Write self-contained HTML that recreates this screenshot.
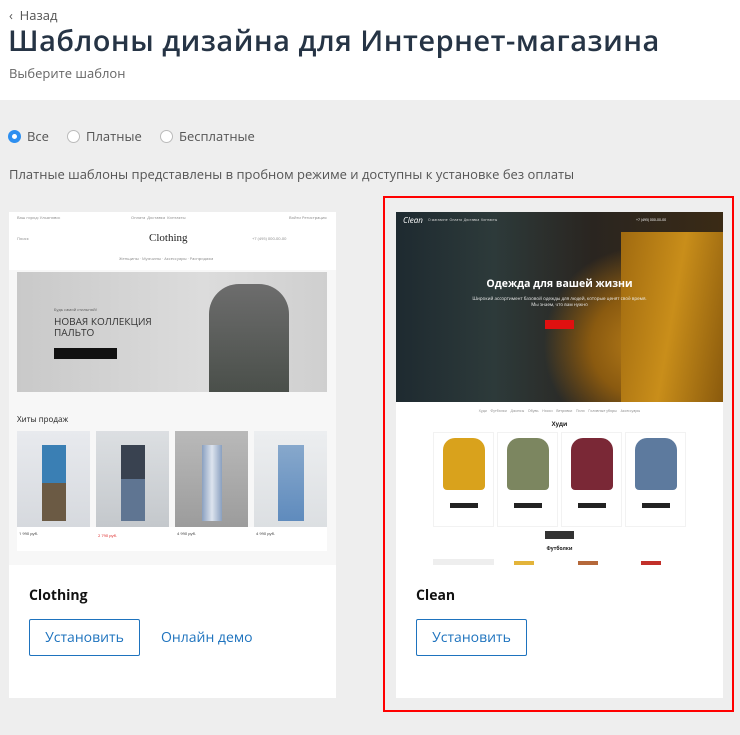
<!DOCTYPE html>
<html><head><meta charset="utf-8"><style>
*{margin:0;padding:0;box-sizing:border-box}
body{width:740px;height:735px;overflow:hidden;font-family:"Open Sans","Liberation Sans","DejaVu Sans",sans-serif;background:#eee;position:relative}
.hdr{position:absolute;left:0;top:0;width:740px;height:100px;background:#fff}
.abs{position:absolute}
.back{left:9px;top:6px;font-size:13px;color:#555}
h1{position:absolute;left:8px;top:21px;font-size:29px;font-weight:600;color:#263445;letter-spacing:0.5px;white-space:nowrap}
.sub{left:9px;top:64px;font-size:13px;color:#666}
.radio{top:127px;font-size:13px;color:#555;display:flex;align-items:center}
.rc{width:13px;height:13px;border-radius:50%;border:1px solid #bbb;background:#fff;margin-right:6px;display:inline-block}
.rc.on{border:4px solid #2d8ff0}
.note{left:9px;top:165px;font-size:13px;color:#555;white-space:nowrap}
.card{position:absolute;background:#fff;width:327px;height:486px;top:212px}
.prev{position:absolute;left:0;top:0;width:327px;height:353px;overflow:hidden;background:#f7f7f7}
.ttl{position:absolute;left:20px;top:374px;font-size:14px;font-weight:bold;color:#111}
.btn{position:absolute;left:20px;top:407px;width:111px;height:37px;border:1px solid #1e73be;border-radius:2px;color:#1e73be;font-size:14px;display:flex;align-items:center;justify-content:center}
.demo{position:absolute;left:152px;top:416px;color:#1e73be;font-size:14px}
.t{position:absolute;font-size:4px;color:#888;white-space:nowrap}
</style></head><body>
<div class="hdr"></div>
<div class="abs back">&#8249;&nbsp; Назад</div>
<h1>Шаблоны дизайна для Интернет-магазина</h1>
<div class="abs sub">Выберите шаблон</div>
<div class="abs radio" style="left:8px"><span class="rc on"></span>Все</div>
<div class="abs radio" style="left:67px"><span class="rc"></span>Платные</div>
<div class="abs radio" style="left:160px"><span class="rc"></span>Бесплатные</div>
<div class="abs note">Платные шаблоны представлены в пробном режиме и доступны к установке без оплаты</div>

<div class="card" style="left:9px">
 <div class="prev">
  <div class="abs" style="left:0;top:0;width:327px;height:58px;background:#fff"></div>
  <div class="t" style="left:8px;top:4px">Ваш город: Ульяновск</div>
  <div class="t" style="left:122px;top:4px">Оплата &nbsp;Доставка &nbsp;Контакты</div>
  <div class="t" style="left:280px;top:4px">Войти Регистрация</div>
  <div class="t" style="left:8px;top:25px">Поиск</div>
  <div class="abs" style="left:140px;top:20px;font-family:'Liberation Serif',serif;font-size:11px;color:#222">Clothing</div>
  <div class="t" style="left:243px;top:25px">+7 (495) 000-00-00</div>
  <div class="t" style="left:110px;top:45px">Женщины · Мужчины · Аксессуары · Распродажа</div>
  <div class="abs" style="left:8px;top:60px;width:310px;height:120px;background:linear-gradient(90deg,#c9c9c9,#dcdcdc 60%,#cfcfcf)"></div>
  <div class="abs" style="left:200px;top:72px;width:80px;height:108px;background:linear-gradient(#6d6d6d,#4a4f4a);border-radius:30px 30px 0 0"></div>
  <div class="t" style="left:45px;top:96px;color:#555">Будь самой стильной!</div>
  <div class="abs" style="left:45px;top:104px;font-size:10px;color:#333;line-height:11px">НОВАЯ КОЛЛЕКЦИЯ<br>ПАЛЬТО</div>
  <div class="abs" style="left:45px;top:136px;width:63px;height:11px;background:#111"></div>
  <div class="abs" style="left:8px;top:202px;font-size:8px;color:#222">Хиты продаж</div>
  <div class="abs" style="left:8px;top:219px;width:73px;height:96px;background:linear-gradient(#e8eaee,#d6d9de)"><div style="margin:14px auto 0;width:24px;height:76px;background:linear-gradient(#3a7fb4 50%,#6b5a44 50%)"></div></div>
  <div class="abs" style="left:87px;top:219px;width:73px;height:96px;background:linear-gradient(#dcdfe2,#c4c8cc)"><div style="margin:14px auto 0;width:24px;height:76px;background:linear-gradient(#394250 45%,#5f7592 45%)"></div></div>
  <div class="abs" style="left:166px;top:219px;width:73px;height:96px;background:linear-gradient(#b9b9b9,#9c9c9c)"><div style="margin:14px auto 0;width:20px;height:76px;background:linear-gradient(90deg,#8aa0c0,#dde4ee,#8aa0c0)"></div></div>
  <div class="abs" style="left:245px;top:219px;width:73px;height:96px;background:linear-gradient(#eceef0,#dcdfe2)"><div style="margin:14px auto 0;width:26px;height:76px;background:linear-gradient(#87a8cc,#5f8bbd)"></div></div>
  <div class="abs" style="left:8px;top:315px;width:310px;height:24px;background:#fff"></div>
  <div class="t" style="left:10px;top:320px;color:#333">1 990 руб.</div>
  <div class="t" style="left:89px;top:322px;color:#d22">2 790 руб.</div>
  <div class="t" style="left:168px;top:320px;color:#333">4 990 руб.</div>
  <div class="t" style="left:247px;top:320px;color:#333">4 990 руб.</div>
 </div>
 <div class="ttl">Clothing</div>
 <div class="btn">Установить</div>
 <div class="demo">Онлайн демо</div>
</div>

<div class="abs" style="left:383px;top:196px;width:351px;height:516px;border:2px solid #f00"></div>
<div class="card" style="left:396px">
 <div class="prev" style="background:#fff">
  <div class="abs" style="left:0;top:0;width:327px;height:190px;background:radial-gradient(circle at 75% 70%,#b57b18 0,#8a5a10 18%,transparent 35%),linear-gradient(90deg,#1e2a30,#2d3a3a 30%,#2a2520 60%,#3a2a15)"></div>
  <div class="abs" style="left:225px;top:20px;width:102px;height:170px;background:linear-gradient(100deg,#a06a10,#c98e1a 50%,#8a5a0d)"></div>
  <div class="abs" style="left:7px;top:3px;font-size:8px;color:#fff;font-style:italic">Clean</div>
  <div class="t" style="left:32px;top:6px;color:#ddd;font-size:3.5px">О магазине &nbsp;Оплата &nbsp;Доставка &nbsp;Контакты</div>
  <div class="t" style="left:240px;top:6px;color:#fff;font-size:3.5px">+7 (495) 000-00-00</div>
  <div class="abs" style="left:0;top:65px;width:327px;text-align:center;font-size:10.5px;font-weight:bold;color:#fff">Одежда для вашей жизни</div>
  <div class="abs" style="left:0;top:84px;width:327px;text-align:center;font-size:4.5px;color:#eee">Широкий ассортимент базовой одежды для людей, которые ценят своё время.<br>Мы знаем, что вам нужно</div>
  <div class="abs" style="left:149px;top:108px;width:29px;height:9px;background:#e01010"></div>
  <div class="t" style="left:0;top:197px;width:327px;text-align:center;font-size:3.5px">Худи &nbsp;&nbsp; Футболки &nbsp;&nbsp; Джинсы &nbsp;&nbsp; Обувь &nbsp;&nbsp; Носки &nbsp;&nbsp; Ветровки &nbsp;&nbsp; Поло &nbsp;&nbsp; Головные уборы &nbsp;&nbsp; Аксессуары</div>
  <div class="abs" style="left:0;top:208px;width:327px;text-align:center;font-size:6px;font-weight:bold;color:#222">Худи</div>
  <div class="abs" style="left:37px;top:220px;width:61px;height:95px;border:1px solid #f2f2f2"><div style="margin:5px auto 0;width:42px;height:52px;background:#d9a21c;border-radius:12px 12px 4px 4px"></div><div style="margin:13px auto 0;width:28px;height:5px;background:#222"></div></div>
  <div class="abs" style="left:101px;top:220px;width:61px;height:95px;border:1px solid #f2f2f2"><div style="margin:5px auto 0;width:42px;height:52px;background:#7c8660;border-radius:12px 12px 4px 4px"></div><div style="margin:13px auto 0;width:28px;height:5px;background:#222"></div></div>
  <div class="abs" style="left:165px;top:220px;width:61px;height:95px;border:1px solid #f2f2f2"><div style="margin:5px auto 0;width:42px;height:52px;background:#7a2836;border-radius:12px 12px 4px 4px"></div><div style="margin:13px auto 0;width:28px;height:5px;background:#222"></div></div>
  <div class="abs" style="left:229px;top:220px;width:61px;height:95px;border:1px solid #f2f2f2"><div style="margin:5px auto 0;width:42px;height:52px;background:#5d7a9e;border-radius:12px 12px 4px 4px"></div><div style="margin:13px auto 0;width:28px;height:5px;background:#222"></div></div>
  <div class="abs" style="left:149px;top:319px;width:29px;height:8px;background:#333"></div>
  <div class="abs" style="left:0;top:334px;width:327px;text-align:center;font-size:5px;font-weight:bold;color:#222">Футболки</div>
  <div class="abs" style="left:37px;top:347px;width:61px;height:6px;background:#eee"></div>
  <div class="abs" style="left:118px;top:349px;width:20px;height:4px;background:#e3b43a"></div>
  <div class="abs" style="left:182px;top:349px;width:20px;height:4px;background:#b5683a"></div>
  <div class="abs" style="left:245px;top:349px;width:20px;height:4px;background:#c2302a"></div>
 </div>
 <div class="ttl">Clean</div>
 <div class="btn">Установить</div>
</div>
</body></html>
